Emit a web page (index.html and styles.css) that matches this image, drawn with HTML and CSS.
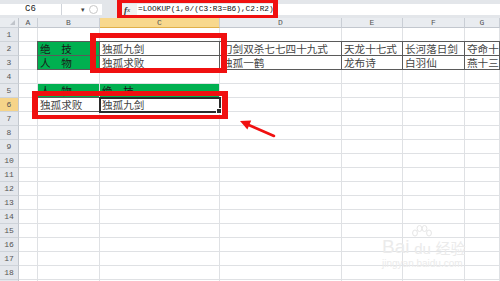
FILE: index.html
```html
<!DOCTYPE html>
<html lang="zh">
<head>
<meta charset="utf-8">
<link rel="stylesheet" href="styles.css">
</head>
<body>
<div class="app">
  <div class="fbar">
    <div class="namebox">C6</div>
    <div class="nbctl"><span class="dd">&#9662;</span><span class="circ"></span></div>
    <div class="fbgap"></div>
    <div class="fx"><i>f</i><span>x</span></div>
    <div class="formula">=LOOKUP(1,0/(C3:R3=B6),C2:R2)</div>
  </div>
  <div class="sheet">
    <div class="row hdr">
      <div class="c rh corner"><span class="tri"></span></div>
      <div class="c ch">A</div><div class="c ch">B</div><div class="c ch sel">C</div><div class="c ch">D</div><div class="c ch">E</div><div class="c ch">F</div><div class="c ch">G</div>
    </div>
    <div class="row">
      <div class="c rh">1</div><div class="c"></div><div class="c"></div><div class="c"></div><div class="c"></div><div class="c"></div><div class="c"></div><div class="c"></div>
    </div>
    <div class="row">
      <div class="c rh">2</div><div class="c"></div>
      <div class="c green tb tl tt">绝　技</div>
      <div class="c tb tt">独孤九剑</div>
      <div class="c tb tt">刀剑双杀七七四十九式</div>
      <div class="c tb tt">天龙十七式</div>
      <div class="c tb tt">长河落日剑</div>
      <div class="c tb tt">夺命十三剑</div>
    </div>
    <div class="row">
      <div class="c rh">3</div><div class="c"></div>
      <div class="c green tb tl">人　物</div>
      <div class="c tb">独孤求败</div>
      <div class="c tb">独孤一鹤</div>
      <div class="c tb">龙布诗</div>
      <div class="c tb">白羽仙</div>
      <div class="c tb">燕十三</div>
    </div>
    <div class="row">
      <div class="c rh">4</div><div class="c"></div><div class="c"></div><div class="c"></div><div class="c"></div><div class="c"></div><div class="c"></div><div class="c"></div>
    </div>
    <div class="row">
      <div class="c rh">5</div><div class="c"></div>
      <div class="c green">人　物</div>
      <div class="c green">绝　技</div>
      <div class="c"></div><div class="c"></div><div class="c"></div><div class="c"></div>
    </div>
    <div class="row">
      <div class="c rh rsel">6</div><div class="c"></div>
      <div class="c tb tl tt">独孤求败</div>
      <div class="c active">独孤九剑</div>
      <div class="c"></div><div class="c"></div><div class="c"></div><div class="c"></div>
    </div>
    <div class="row"><div class="c rh">7</div><div class="c"></div><div class="c"></div><div class="c"></div><div class="c"></div><div class="c"></div><div class="c"></div><div class="c"></div></div>
    <div class="row"><div class="c rh">8</div><div class="c"></div><div class="c"></div><div class="c"></div><div class="c"></div><div class="c"></div><div class="c"></div><div class="c"></div></div>
    <div class="row"><div class="c rh">9</div><div class="c"></div><div class="c"></div><div class="c"></div><div class="c"></div><div class="c"></div><div class="c"></div><div class="c"></div></div>
    <div class="row"><div class="c rh">10</div><div class="c"></div><div class="c"></div><div class="c"></div><div class="c"></div><div class="c"></div><div class="c"></div><div class="c"></div></div>
    <div class="row"><div class="c rh">11</div><div class="c"></div><div class="c"></div><div class="c"></div><div class="c"></div><div class="c"></div><div class="c"></div><div class="c"></div></div>
    <div class="row"><div class="c rh">12</div><div class="c"></div><div class="c"></div><div class="c"></div><div class="c"></div><div class="c"></div><div class="c"></div><div class="c"></div></div>
    <div class="row"><div class="c rh">13</div><div class="c"></div><div class="c"></div><div class="c"></div><div class="c"></div><div class="c"></div><div class="c"></div><div class="c"></div></div>
    <div class="row"><div class="c rh">14</div><div class="c"></div><div class="c"></div><div class="c"></div><div class="c"></div><div class="c"></div><div class="c"></div><div class="c"></div></div>
    <div class="row"><div class="c rh">15</div><div class="c"></div><div class="c"></div><div class="c"></div><div class="c"></div><div class="c"></div><div class="c"></div><div class="c"></div></div>
    <div class="row"><div class="c rh">16</div><div class="c"></div><div class="c"></div><div class="c"></div><div class="c"></div><div class="c"></div><div class="c"></div><div class="c"></div></div>
    <div class="row"><div class="c rh">17</div><div class="c"></div><div class="c"></div><div class="c"></div><div class="c"></div><div class="c"></div><div class="c"></div><div class="c"></div></div>
    <div class="row"><div class="c rh">18</div><div class="c"></div><div class="c"></div><div class="c"></div><div class="c"></div><div class="c"></div><div class="c"></div><div class="c"></div></div>
    <div class="row"><div class="c rh"></div><div class="c"></div><div class="c"></div><div class="c"></div><div class="c"></div><div class="c"></div><div class="c"></div><div class="c"></div></div>
  </div>

  <div class="mark mark-formula"></div>
  <div class="mark mark-range"></div>
  <div class="mark mark-result"></div>
  <svg class="arrow" width="500" height="281" viewBox="0 0 500 281">
    <line x1="274" y1="136" x2="247" y2="124.2" stroke="#f01010" stroke-width="2.6" stroke-linecap="round"/>
    <polygon points="240,121 251.2,120.6 247.4,129.4" fill="#f01010"/>
  </svg>

  <div class="wm">
    <div class="wm-top">
      <span class="wm-bai">Bai</span>
      <span class="wm-du">
        <svg class="paw" width="22" height="17" viewBox="0 0 22 17">
          <ellipse cx="4" cy="8" rx="2.4" ry="3" fill="none" stroke="#e6e6e6"/>
          <ellipse cx="8.5" cy="3.5" rx="2.4" ry="3" fill="none" stroke="#e6e6e6"/>
          <ellipse cx="13.5" cy="3.5" rx="2.4" ry="3" fill="none" stroke="#e6e6e6"/>
          <ellipse cx="18" cy="8" rx="2.4" ry="3" fill="none" stroke="#e6e6e6"/>
        </svg>
        <span>du</span>
      </span>
      <span class="wm-jy">经验</span>
    </div>
    <div class="wm-url">jingyan.baidu.com</div>
  </div>
</div>
</body>
</html>
```

FILE: styles.css
```css
html, body {
  margin: 0;
  padding: 0;
  background: #ffffff;
}
.app {
  position: relative;
  width: 500px;
  height: 281px;
  overflow: hidden;
  font-family: "Noto Sans CJK SC", "Liberation Serif", serif;
}

/* formula bar */
.fbar {
  height: 18px;
  box-sizing: border-box;
  padding-top: 4px;
  padding-bottom: 3px;
  background: #e3e6ea;
  display: flex;
}
.namebox {
  width: 62px;
  background: #fff;
  border-right: 1px solid #d0d4da;
  box-sizing: border-box;
  font-family: "Liberation Mono", monospace;
  font-size: 9px;
  line-height: 11px;
  text-align: center;
  color: #222;
}
.nbctl {
  width: 40px;
  background: #fff;
  display: flex;
  align-items: center;
}
.dd {
  font-size: 7px;
  color: #444;
  margin-left: 19px;
  line-height: 11px;
}
.circ {
  width: 7px;
  height: 7px;
  border: 1px solid #c7c7c7;
  border-radius: 50%;
  margin-left: 4px;
}
.fbgap {
  width: 15px;
}
.fx {
  width: 20px;
  display: flex;
  align-items: center;
  justify-content: center;
  font-family: "Liberation Serif", serif;
  font-size: 9px;
  color: #333;
  background: #f1f1f1;
}
.fx i { font-weight: bold; }
.fx span { font-size: 7px; font-style: italic; }
.formula {
  flex: 1;
  background: #fff;
  font-family: "Liberation Mono", monospace;
  font-size: 7.8px;
  line-height: 11px;
  color: #111;
  padding-left: 1px;
  white-space: nowrap;
}

/* sheet */
.sheet {
  display: flex;
  flex-direction: column;
}
.row {
  display: grid;
  grid-template-columns: 19px 19px 62px 120px 122px 61px 62px 35px;
  height: 14px;
}
.row.hdr {
  height: 10px;
}
.c {
  box-sizing: border-box;
  border-right: 1px solid #dfe1e4;
  border-bottom: 1px solid #dfe1e4;
  font-size: 10.6px;
  line-height: 13px;
  padding-left: 2px;
  color: #444;
  white-space: nowrap;
  overflow: hidden;
}
.ch {
  background: #e9ecf0;
  border-right: 1px solid #c9ced5;
  border-bottom: 1px solid #c2c7ce;
  font-family: "Liberation Mono", monospace;
  font-size: 8px;
  line-height: 9px;
  text-align: center;
  padding-left: 0;
  color: #555;
}
.ch.sel {
  background: #f8d88d;
  border-bottom-color: #e0b04a;
}
.rh {
  background: #e4e7ec;
  border-right: 1px solid #c2c7ce;
  border-bottom: 1px solid #ced3d9;
  font-family: "Liberation Mono", monospace;
  font-size: 8px;
  line-height: 13px;
  text-align: center;
  padding-left: 0;
  color: #555;
}
.rh.rsel {
  background: #f6d489;
}
.corner {
  position: relative;
  background: #e9ecf0;
}
.tri {
  position: absolute;
  right: 3px;
  bottom: 2px;
  width: 0;
  height: 0;
  border-left: 5px solid transparent;
  border-bottom: 5px solid #c0c4ca;
}
.green {
  background: #00b050;
  color: #1a1a1a;
}
.tb {
  border-right-color: #5a5a5a;
  border-bottom-color: #5a5a5a;
}
.tt { box-shadow: 0 -1px 0 #5a5a5a; }
.tl { box-shadow: -1px 0 0 #5a5a5a; }
.tl.tt { box-shadow: -1px 0 0 #5a5a5a, 0 -1px 0 #5a5a5a, -1px -1px 0 #5a5a5a; }
.active {
  position: relative;
  overflow: visible;
  outline: 2px solid #2b2b2b;
  outline-offset: -1px;
}
.active::after {
  content: "";
  position: absolute;
  right: -3px;
  bottom: -3px;
  width: 4px;
  height: 4px;
  background: #2b2b2b;
  border: 1px solid #fff;
}

/* annotations */
.mark {
  position: absolute;
  box-sizing: border-box;
  border: 5px solid #f01010;
}
.mark-formula {
  left: 117px;
  top: -1px;
  width: 161px;
  height: 19px;
  border-width: 4px 5px 3px 5px;
}
.mark-range {
  left: 90px;
  top: 33px;
  width: 137px;
  height: 40px;
  border-width: 5px 6px;
}
.mark-result {
  left: 32px;
  top: 91px;
  width: 196px;
  height: 28px;
  border-width: 5px 6px 4px 6px;
}
.arrow {
  position: absolute;
  left: 0;
  top: 0;
}

/* watermark */
.wm {
  position: absolute;
  left: 382px;
  top: 224px;
  color: #ebebeb;
  font-family: "Liberation Sans", sans-serif;
}
.wm-top {
  display: flex;
  align-items: flex-end;
  height: 32px;
}
.wm-bai {
  font-size: 19px;
  line-height: 19px;
}
.wm-du {
  display: flex;
  flex-direction: column;
  align-items: center;
  font-size: 15px;
  line-height: 14px;
  margin-left: 2px;
}
.wm-jy {
  font-family: "Noto Sans CJK SC", sans-serif;
  font-size: 15px;
  line-height: 17px;
  margin-left: 2px;
}
.wm-url {
  font-size: 10px;
  line-height: 13px;
  margin-top: 1px;
}
```
